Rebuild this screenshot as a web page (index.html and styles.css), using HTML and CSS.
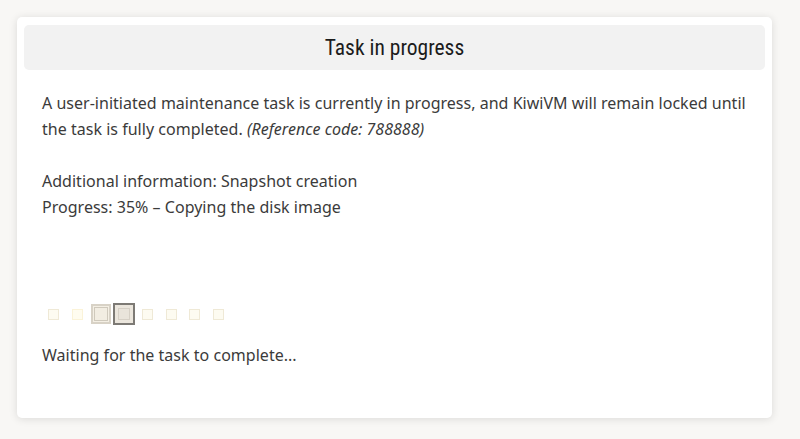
FILE: index.html
```html
<!DOCTYPE html>
<html lang="en">
<head>
<meta charset="utf-8">
<title>Task in progress</title>
<link rel="stylesheet" href="styles.css">
</head>
<body>
<div class="card">
  <div class="card-header">
    <h1 class="title">Task in progress</h1>
  </div>
  <div class="card-body">
    <p class="text">A user-initiated maintenance task is currently in progress, and KiwiVM will remain locked until the task is fully completed. <em>(Reference code: 788888)</em></p>
    <p class="text">Additional information: Snapshot creation<br>Progress: 35% – Copying the disk image</p>
    <div class="loader">
      <span class="cell"><span class="sq sq-1"></span></span>
      <span class="cell"><span class="sq sq-2"></span></span>
      <span class="cell"><span class="sq sq-3"></span></span>
      <span class="cell"><span class="sq sq-4"></span></span>
      <span class="cell"><span class="sq sq-1"></span></span>
      <span class="cell"><span class="sq sq-1"></span></span>
      <span class="cell"><span class="sq sq-1"></span></span>
      <span class="cell"><span class="sq sq-1"></span></span>
    </div>
    <p class="text waiting">Waiting for the task to complete...</p>
  </div>
</div>
</body>
</html>
```

FILE: styles.css
```css
html, body {
  margin: 0;
  padding: 0;
}
body {
  background: #f8f7f5;
  padding: 17px 28px 21px 17px;
  font-family: "Noto Sans", "Open Sans", sans-serif;
  color: #3b3b3b;
}
.card {
  background: #ffffff;
  border-radius: 5px;
  box-shadow: 0 1px 8px rgba(0, 0, 0, 0.12);
  padding: 8px 7px 7px 7px;
  height: 401px;
  box-sizing: border-box;
}
.card-header {
  background: #f2f2f2;
  border-radius: 5px;
  height: 45px;
  display: flex;
  align-items: center;
  justify-content: center;
}
.title {
  margin: 0;
  font-family: "Liberation Sans Narrow", "Roboto Condensed", "Roboto", sans-serif;
  font-weight: 400;
  font-size: 21.5px;
  color: #1c1c1c;
}
.card-body {
  padding: 20px 6px 0 18px;
}
.text {
  margin: 0 0 26px 0;
  font-size: 16px;
  line-height: 26px;
  letter-spacing: 0.02px;
}
.text em {
  font-style: italic;
}
.loader {
  display: flex;
  align-items: center;
  height: 22px;
  margin-top: 83px;
}
.cell {
  width: 23.5px;
  display: flex;
  justify-content: center;
  align-items: center;
}
.sq {
  display: block;
  box-sizing: border-box;
}
.sq-1 {
  width: 11px;
  height: 11px;
  background: #fdfbf1;
  border: 1px solid #efe9d6;
}
.sq-2 {
  width: 11px;
  height: 11px;
  background: #fffcef;
  border: 1px solid #fbf3d8;
}
.sq-3 {
  width: 20px;
  height: 20px;
  background: #f2ede2;
  border: 2px solid #d8d2c6;
  box-shadow: inset 0 0 0 1px #f4efe4, inset 0 0 0 2px #cfc9bc;
}
.sq-4 {
  width: 22px;
  height: 22px;
  background: #e9e4db;
  border: 2px solid #7d7a75;
  box-shadow: inset 0 0 0 3px #ebe6dd, inset 0 0 0 4px #d6d0c6;
}
.waiting {
  margin-top: 17px;
  margin-bottom: 0;
}
```
